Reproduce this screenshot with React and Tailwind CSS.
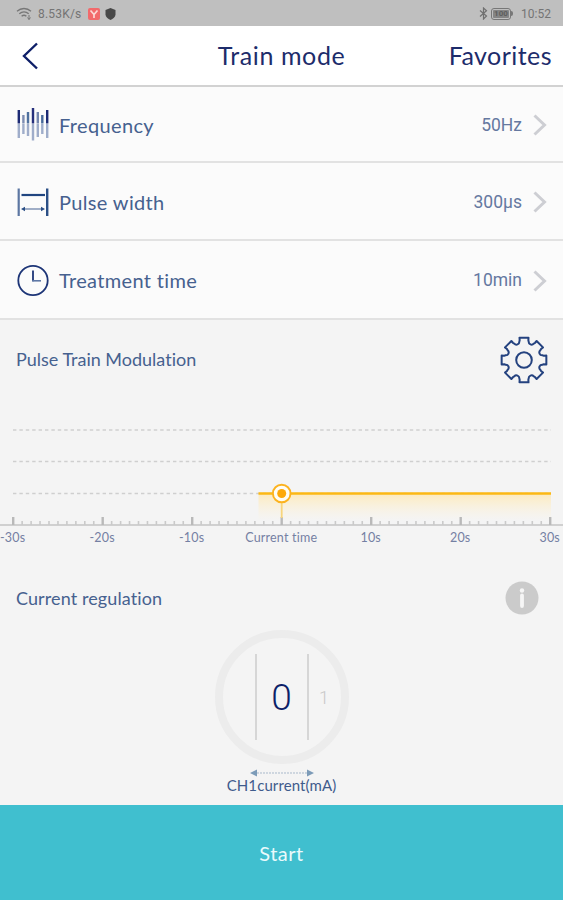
const gearPath = (() => {
  const outline = [
    [-14.2, 19],
    [-12.4, 20.2],
    [-11.4, 22.8],
    [11.4, 22.8],
    [12.4, 20.2],
    [14.2, 19],
  ];
  const points = [];
  for (let tooth = 0; tooth < 8; tooth++) {
    outline.forEach(([deg, r]) => {
      const a = ((tooth * 45 + deg - 90) * Math.PI) / 180;
      points.push([24 + r * Math.cos(a), 24 + r * Math.sin(a)]);
    });
  }
  let d = "";
  points.forEach(([x, y], i) => {
    const xy = `${x.toFixed(2)} ${y.toFixed(2)}`;
    if (i === 0) d += `M${xy}`;
    // the valley between two teeth curves towards the centre
    else if (i % 6 === 0) d += `A2.9 2.9 0 0 0 ${xy}`;
    else d += `L${xy}`;
  });
  const [x0, y0] = points[0];
  return `${d}A2.9 2.9 0 0 0 ${x0.toFixed(2)} ${y0.toFixed(2)}Z`;
})();

const bars = [
  { x: 1.8, top: 3, bottom: 31, color: "#1c2a74" },
  { x: 6.4, top: 8, bottom: 27, color: "#7d8db2" },
  { x: 11, top: 5, bottom: 29, color: "#4f719f" },
  { x: 16, top: 1, bottom: 33.5, color: "#26307c" },
  { x: 20.8, top: 5, bottom: 30, color: "#7486ae" },
  { x: 25.3, top: 8, bottom: 27, color: "#47699a" },
  { x: 30.2, top: 3, bottom: 31, color: "#1c2a74" },
];

function FrequencyIcon() {
  return (
    <svg width="32" height="34" viewBox="0 0 32 34">
      {bars.map((bar) => (
        <g key={bar.x} strokeWidth="2.4">
          <path d={`M${bar.x} ${bar.top - 1}V15.5`} stroke={bar.color} />
          <path d={`M${bar.x} 16V${bar.bottom - 1}`} stroke="#9fadca" />
        </g>
      ))}
    </svg>
  );
}

function PulseWidthIcon() {
  return (
    <svg width="32" height="34" viewBox="0 0 32 34" fill="none">
      <path d="M1.7 3.5V31" stroke="#5c76a2" strokeWidth="2.2" />
      <path d="M30.2 3.5V31" stroke="#2b4f86" strokeWidth="2.4" />
      <path d="M4.5 10H28" stroke="#204580" strokeWidth="2.2" />
      <path d="M6 24H26" stroke="#56709d" strokeWidth="1.1" />
      <path d="M4 24l4-2.3v4.6zM28 24l-4-2.3v4.6z" fill="#2b4f86" />
    </svg>
  );
}

function ClockIcon() {
  return (
    <svg width="32" height="34" viewBox="0 0 32 34" fill="none">
      <circle cx="16" cy="16.5" r="14.7" stroke="#1d3577" strokeWidth="1.8" />
      <path d="M16 6.5V17.3" stroke="#1d3577" strokeWidth="1.8" />
      <path d="M15.2 16.8H24" stroke="#5f78a6" strokeWidth="1.6" />
    </svg>
  );
}

function StatusBar() {
  return (
    <div className="flex h-[26px] items-center justify-between bg-[#bfbfbf] pr-[12px] pl-[16px] font-['Roboto',sans-serif] text-[12px] text-[#747474]">
      <div className="flex items-center pt-px">
        <svg width="16" height="14" viewBox="0 0 16 14" fill="none" stroke="#777" strokeWidth="1.3">
          <path d="M1 4.2C5 .6 11 .6 15 4.2" />
          <path d="M3.3 6.8c2.8-2.5 6.6-2.5 9.4 0" />
          <path d="M5.6 9.3c1.5-1.3 3.3-1.3 4.8 0" />
          <path d="M13 8v4.5M11.5 10.5L13 12.5l1.5-2" strokeWidth="1" />
        </svg>
        <span className="ml-[6px] w-[44px] whitespace-nowrap tracking-[0.2px]">8.53K/s</span>
        <svg className="ml-[6px]" width="12" height="12" viewBox="0 0 12 12">
          <rect width="12" height="12" rx="2" fill="#f26a6c" />
          <path d="M2.5 2.5L6 6.5l3.5-4M6 6.5V10" stroke="#fbd9d6" strokeWidth="1.7" fill="none" />
        </svg>
        <svg className="ml-[5px]" width="11" height="12" viewBox="0 0 11 12">
          <path d="M5.5 0L10.500 2v4.5C10.5 9 8 11 5.5 12 3 11 .5 9 .5 6.5V2z" fill="#484848" />
        </svg>
      </div>
      <div className="flex items-center pt-px">
        <svg width="9" height="13" viewBox="0 0 9 13" fill="none" stroke="#707070" strokeWidth="1.2">
          <path d="M1 3.5l6.5 5.5L4.5 12V1l3 2.8L1 9.5" />
        </svg>
        <div className="ml-[3px] flex h-[12px] w-[20px] items-center justify-center rounded-[3px] border border-[#777] p-px">
          <div className="flex h-full w-full items-center justify-center rounded-[1px] bg-[#858585] text-[8px] leading-none font-bold text-[#5e5e5e]">
            100
          </div>
        </div>
        <div className="h-[5px] w-[2px] rounded-r-sm bg-[#777]" />
        <span className="ml-[6px] w-[32px] text-right whitespace-nowrap">10:52</span>
      </div>
    </div>
  );
}

function SettingRow({ icon, label, value, className }) {
  return (
    <div className={`flex items-center border-b-2 border-[#e2e2e2] bg-[#fbfbfb] pt-[2px] pr-[16px] pl-[17px] ${className}`}>
      {icon}
      <span className="ml-[10px] pb-px text-[20px] tracking-[0.35px] text-[#46618f]">{label}</span>
      <span className="ml-auto font-['Roboto',sans-serif] text-[17.5px] text-[#6578a0]">{value}</span>
      <svg className="ml-[11px]" width="14" height="24" viewBox="0 0 14 24" fill="none">
        <path d="M1.5 2.5L11.5 12 1.5 21.5" stroke="#cdced3" strokeWidth="3" />
      </svg>
    </div>
  );
}

const ticks = Array.from({ length: 61 }, (_, i) => i - 30);
const tickX = (s) => 281.7 + s * 8.95;
const labels = [
  [-30, "-30s"],
  [-20, "-20s"],
  [-10, "-10s"],
  [0, "Current time"],
  [10, "10s"],
  [20, "20s"],
  [30, "30s"],
];

function ModulationChart() {
  return (
    <svg className="block" width="563" height="160" viewBox="0 400 563 160">
      <defs>
        <linearGradient id="glow" x1="0" y1="0" x2="0" y2="1">
          <stop offset="0" stopColor="#fde9b8" stopOpacity="0.9" />
          <stop offset="1" stopColor="#fdf3dc" stopOpacity="0" />
        </linearGradient>
      </defs>
      {[430, 461.5, 493.5].map((y) => (
        <path key={y} d={`M13 ${y}H551`} stroke="#cfcfcf" strokeWidth="1.5" strokeDasharray="3.4 3" />
      ))}
      <rect x="258.5" y="494" width="292.5" height="27" fill="url(#glow)" />
      <path d="M0 525H563" stroke="#c4c4c4" strokeWidth="1.5" />
      {ticks.map((s) => (
        <path
          key={s}
          d={`M${tickX(s)} ${s % 10 === 0 ? 517 : 521}V525`}
          stroke={s % 10 === 0 ? "#b9b9b9" : "#cacaca"}
          strokeWidth={s % 10 === 0 ? 2.4 : 1.6}
        />
      ))}
      <path d="M281.7 500V518" stroke="#f8d57c" strokeWidth="1.8" />
      <path d="M258.5 493.5H551" stroke="#fcb814" strokeWidth="2.5" />
      <circle cx="281.7" cy="493.5" r="8.8" fill="#fffdf5" stroke="#fcb320" strokeWidth="1.9" />
      <circle cx="281.7" cy="493.5" r="4.5" fill="#fda90a" />
      {labels.map(([s, text]) => (
        <text
          key={s}
          x={tickX(s) - 0.5}
          y="542"
          textAnchor="middle"
          fill="#7480a3"
          className="text-[12.5px] tracking-[0.2px]"
        >
          {text}
        </text>
      ))}
    </svg>
  );
}

export default function App() {
  return (
    <div className="flex h-[900px] w-[563px] flex-col overflow-hidden bg-[#f4f4f4] font-['Lato',sans-serif] [font-variant-ligatures:none]">
      <StatusBar />

      <header className="grid h-[61px] grid-cols-3 items-center border-b-2 border-[#d2d2d2] bg-white pr-[11px] pl-[22px] text-[#1d2c6b]">
        <svg width="17" height="28" viewBox="0 0 17 28" fill="none">
          <path d="M15 1.5L2 14l13 12.5" stroke="#0e1f68" strokeWidth="2.4" />
        </svg>
        <h1 className="-ml-[11px] text-center text-[25px] tracking-[0.6px] whitespace-nowrap">Train mode</h1>
        <span className="text-right text-[25px] tracking-[0.45px] whitespace-nowrap">Favorites</span>
      </header>

      <SettingRow className="h-[76px]" icon={<FrequencyIcon />} label="Frequency" value="50Hz" />
      <SettingRow className="h-[78px]" icon={<PulseWidthIcon />} label="Pulse width" value="300μs" />
      <SettingRow className="h-[79px]" icon={<ClockIcon />} label="Treatment time" value="10min" />

      <div className="flex h-[80px] items-center justify-between pr-[15px] pl-[16px]">
        <h2 className="pb-[2px] text-[18px] text-[#46618f]">Pulse Train Modulation</h2>
        <svg width="48" height="48" viewBox="0 0 48 48" fill="none" stroke="#24427f" strokeWidth="2" strokeLinejoin="round">
          <path d={gearPath} />
          <circle cx="24" cy="24" r="7.8" />
        </svg>
      </div>

      <ModulationChart />

      <div className="flex h-[70px] items-center justify-between pt-[6px] pr-[24px] pl-[16px]">
        <h2 className="text-[18px] tracking-[0.1px] text-[#46618f]">Current regulation</h2>
        <svg width="34" height="34" viewBox="0 0 34 34">
          <circle cx="17" cy="17" r="16.5" fill="#cbcbcb" />
          <circle cx="17" cy="9.5" r="2.2" fill="#f6f6f6" />
          <path d="M17 14.5V25" stroke="#f6f6f6" strokeWidth="3.8" strokeLinecap="round" />
        </svg>
      </div>

      <div className="flex flex-1 flex-col items-center text-[#3f5b8c]">
        <div className="grid h-[134px] w-[134px] shrink-0 grid-cols-[32px_54px_31px] items-center rounded-full border-8 border-[#ececec] font-['Roboto',sans-serif]">
          <span />
          <span className="flex h-[86px] items-center justify-center border-x-2 border-[#d6d6d6] pt-[2px] text-[37px] font-light text-[#0c1f68]">
            0
          </span>
          <span className="text-center text-[18px] font-light text-[#c8c8c8]">1</span>
        </div>
        <svg className="mt-[4px] shrink-0" width="64" height="10" viewBox="0 0 64 10">
          <path d="M7 5H57" stroke="#a9b9cb" strokeWidth="1" strokeDasharray="2 1" />
          <path d="M0 5l7-3.5v7zM64 5l-7-3.5v7z" fill="#7c9bb8" />
        </svg>
        <p className="text-[15px] leading-[14px] tracking-[0.1px]">CH1current(mA)</p>
      </div>

      <button className="h-[95px] w-full shrink-0 bg-[#40bfcf] text-[20px] tracking-[0.5px] text-[#e9fafc]">Start</button>
    </div>
  );
}
